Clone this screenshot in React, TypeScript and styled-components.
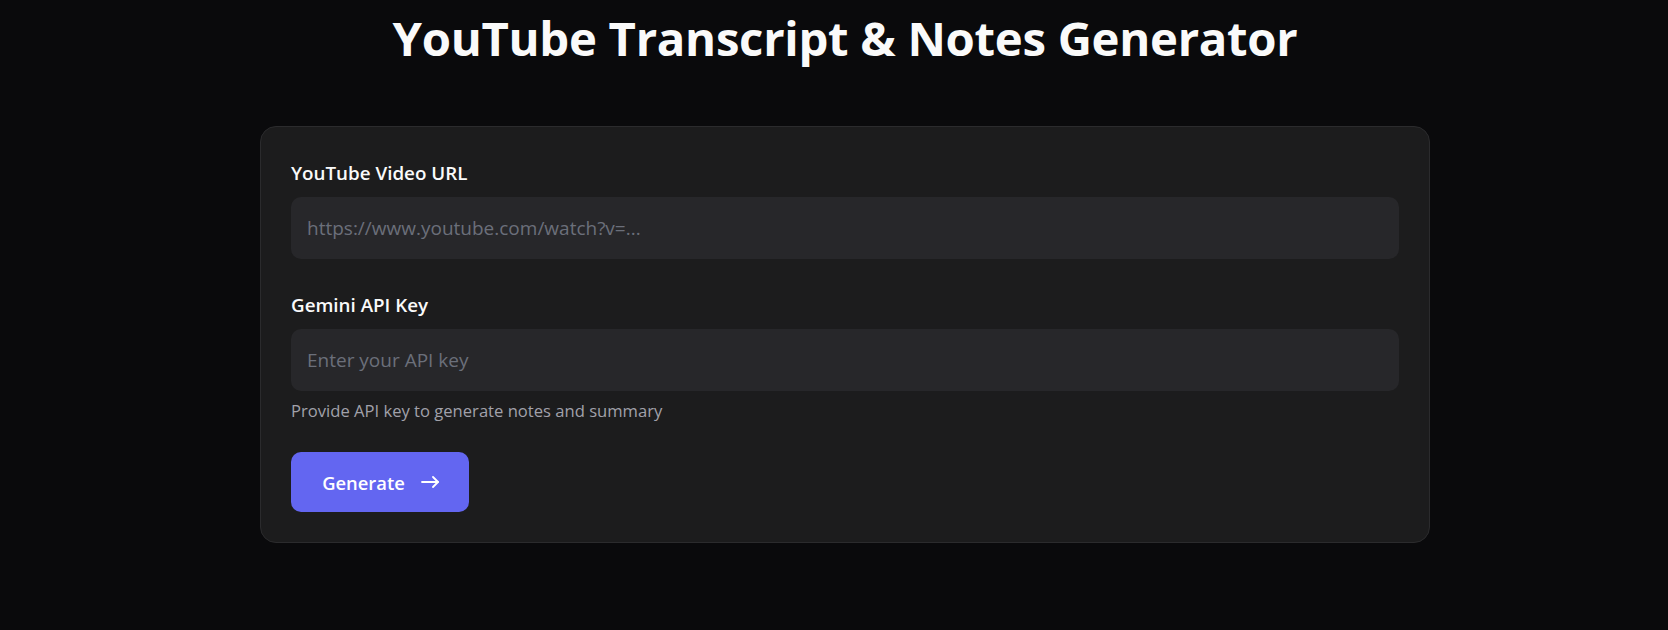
import React from "react";
import styled, { createGlobalStyle } from "styled-components";

const GlobalStyle = createGlobalStyle`
  html, body {
    margin: 0;
    padding: 0;
    background: #0a0a0c;
  }
  body {
    font-family: "Open Sans", "Noto Sans", sans-serif;
    color: #fafafa;
  }
  * { box-sizing: border-box; }
`;

const Page = styled.main`
  min-height: 630px;
  display: flex;
  flex-direction: column;
  align-items: center;
  padding: 0 0 0 22px;
  background: #0a0a0c;
`;

const Title = styled.h1`
  margin: 0;
  padding-top: 5px;
  font-size: 47.3px;
  line-height: 66px;
  font-weight: 700;
  color: #fafafa;
  letter-spacing: -0.3px;
`;

const Card = styled.section`
  margin-top: 55px;
  width: 1170px;
  background: #1c1c1d;
  border: 1px solid #2b2b2d;
  border-radius: 16px;
  padding: 30px;
  display: flex;
  flex-direction: column;
`;

const Field = styled.div<{ $gap?: number }>`
  display: flex;
  flex-direction: column;
  margin-bottom: ${(p) => p.$gap ?? 0}px;
`;

const Label = styled.label`
  font-size: 18.8px;
  line-height: 32px;
  font-weight: 600;
  color: #fafafa;
  margin-bottom: 8px;
`;

const Input = styled.input`
  height: 62px;
  width: 100%;
  border: none;
  outline: none;
  border-radius: 10px;
  background: #27272a;
  padding: 0 16px;
  font-family: "Open Sans", "Noto Sans", sans-serif;
  font-size: 19px;
  color: #fafafa;
  &::placeholder {
    color: #6b6f7a;
  }
`;

const Helper = styled.p`
  margin: 8px 0 0;
  font-size: 16.6px;
  line-height: 24px;
  color: #a1a1aa;
`;

const Button = styled.button`
  margin-top: 29px;
  align-self: flex-start;
  width: 178px;
  height: 60px;
  border: none;
  border-radius: 10px;
  background: #6366f1;
  color: #ffffff;
  display: flex;
  align-items: center;
  justify-content: center;
  gap: 16px;
  font-family: "Open Sans", "Noto Sans", sans-serif;
  font-size: 18.4px;
  font-weight: 600;
  cursor: pointer;
  padding: 0 0 0 1px;
`;

const Arrow = () => (
  <svg width="18" height="12" viewBox="0 0 18 12" fill="none" stroke="currentColor" strokeWidth="1.8" strokeLinecap="round" strokeLinejoin="round">
    <path d="M1 6h16" />
    <path d="M12 1l5 5-5 5" />
  </svg>
);

export default function App() {
  return (
    <>
      <GlobalStyle />
      <Page>
        <Title>YouTube Transcript &amp; Notes Generator</Title>
        <Card>
          <Field $gap={30}>
            <Label htmlFor="url">YouTube Video URL</Label>
            <Input id="url" placeholder="https://www.youtube.com/watch?v=..." />
          </Field>
          <Field>
            <Label htmlFor="key">Gemini API Key</Label>
            <Input id="key" placeholder="Enter your API key" />
            <Helper>Provide API key to generate notes and summary</Helper>
          </Field>
          <Button type="button">
            Generate
            <Arrow />
          </Button>
        </Card>
      </Page>
    </>
  );
}
